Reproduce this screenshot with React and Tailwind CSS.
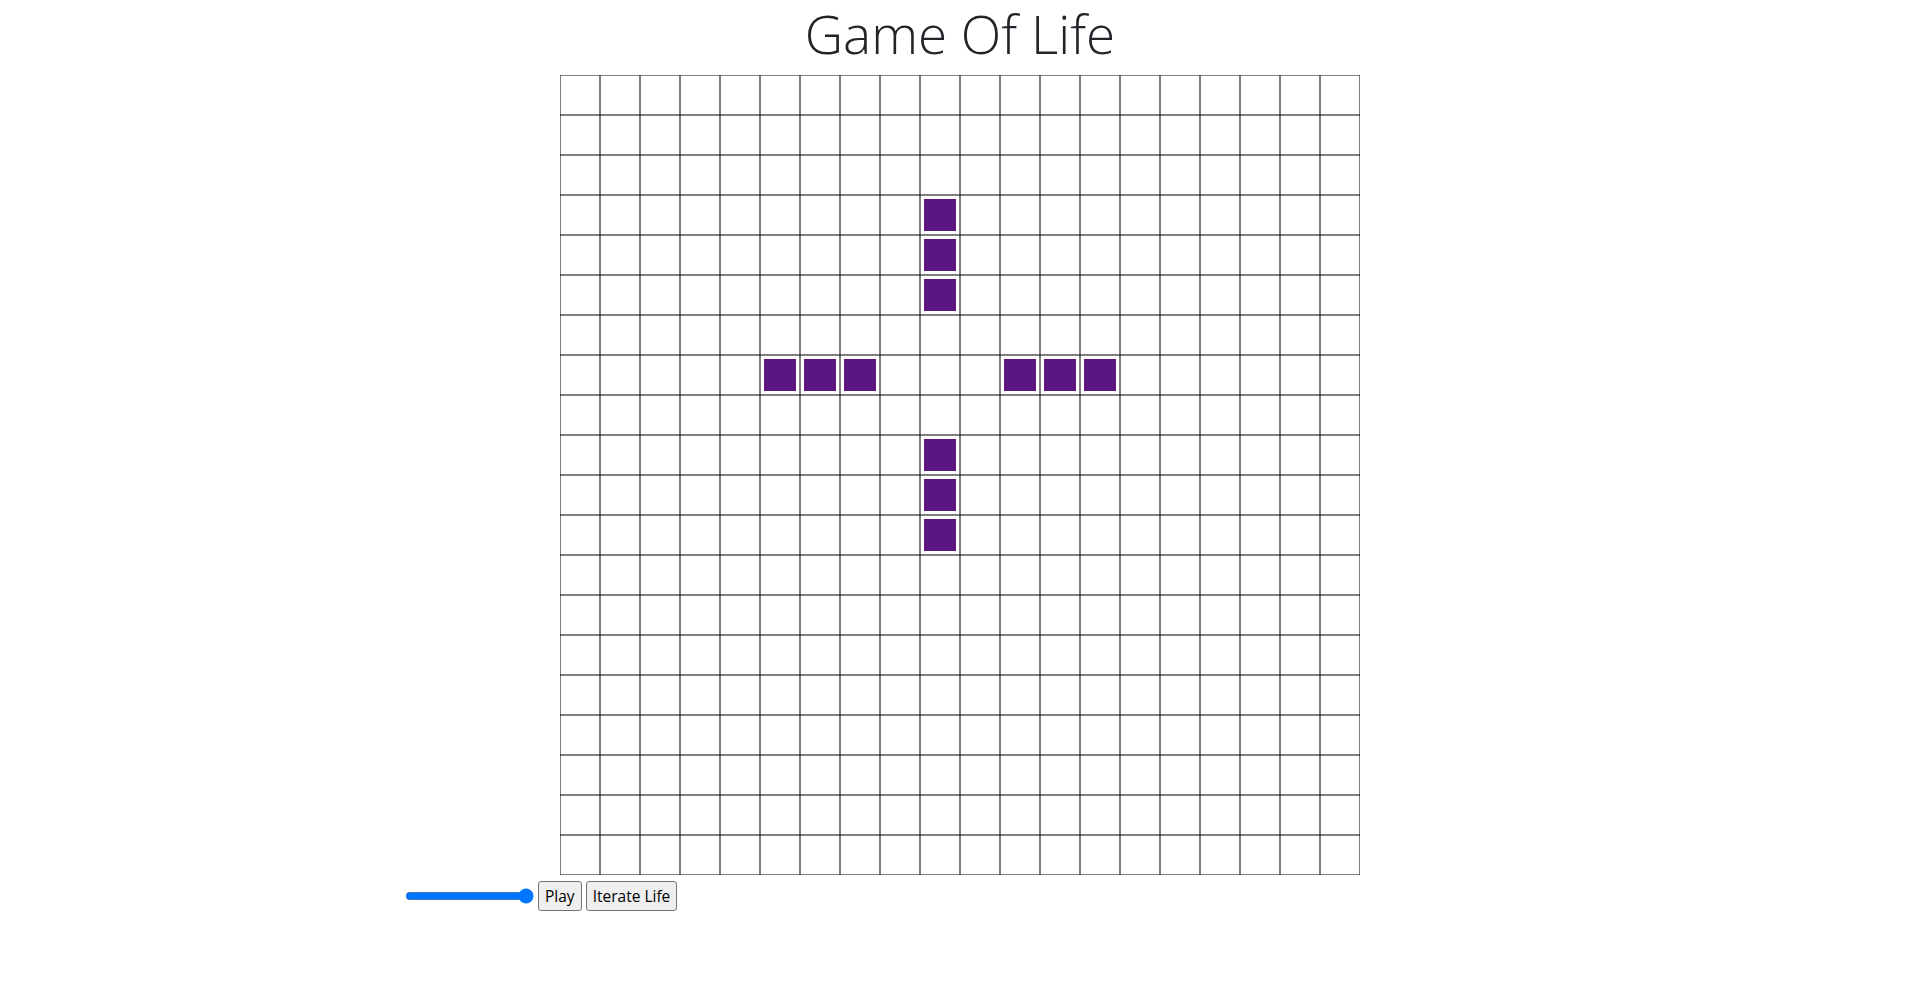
import React from "react";

const SIZE = 20;
const CELL = 40;

// celdas vivas iniciales (fila, columna)
const alive = [
  [3, 9], [4, 9], [5, 9],
  [7, 5], [7, 6], [7, 7],
  [7, 11], [7, 12], [7, 13],
  [9, 9], [10, 9], [11, 9],
];

function Board() {
  const lines = [];
  for (let i = 0; i <= SIZE; i++) {
    const p = i * CELL;
    lines.push(<line key={"v" + i} x1={p} y1={0} x2={p} y2={SIZE * CELL} />);
    lines.push(<line key={"h" + i} x1={0} y1={p} x2={SIZE * CELL} y2={p} />);
  }
  return (
    <svg width="800" height="800" viewBox="0 0 800 800" className="block">
      <rect width="800" height="800" fill="#ffffff" />
      {alive.map(([r, c]) => (
        <rect key={r + "-" + c} x={c * CELL + 4} y={r * CELL + 4} width="32" height="32" fill="#5c1682" />
      ))}
      <g stroke="#000000" strokeOpacity="0.5" strokeWidth="2" shapeRendering="crispEdges">{lines}</g>
    </svg>
  );
}

export default function App() {
  return (
    <div className="min-h-screen bg-white text-[#212529] font-['Segoe_UI','Open_Sans',sans-serif] text-base leading-6">
      <div className="mx-auto w-[1140px] px-[15px]">
        <h1 className="text-center text-[53px] font-light leading-[67px] mb-2">Game Of Life</h1>
        <div className="flex justify-center mb-[6px]">
          <Board />
        </div>
        <div className="flex items-center gap-[4px]">
          <input
            type="range"
            min="0"
            max="100"
            defaultValue="100"
            className="w-[129px] m-0 accent-[#0075ff]"
          />
          <button className="h-[30px] px-[6px] border border-[#767676] rounded-[3px] bg-[#efefef] text-black text-[15.5px] leading-6">
            Play
          </button>
          <button className="h-[30px] px-[6px] border border-[#767676] rounded-[3px] bg-[#efefef] text-black text-[15.5px] leading-6">
            Iterate Life
          </button>
        </div>
      </div>
    </div>
  );
}
